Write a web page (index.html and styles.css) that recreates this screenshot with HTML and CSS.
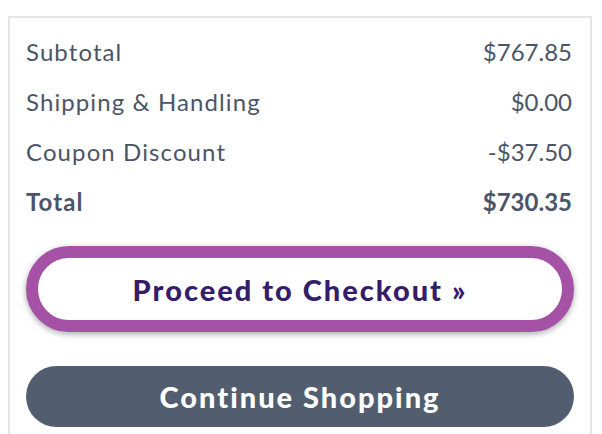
FILE: index.html
```html
<!DOCTYPE html>
<html>
<head>
<meta charset="utf-8">
<link rel="stylesheet" href="styles.css">
</head>
<body>
<div class="summary">
  <div class="rows">
    <div class="row"><span class="label">Subtotal</span><span class="value">$767.85</span></div>
    <div class="row"><span class="label">Shipping &amp; Handling</span><span class="value">$0.00</span></div>
    <div class="row"><span class="label">Coupon Discount</span><span class="value">-$37.50</span></div>
    <div class="row total"><span class="label">Total</span><span class="value">$730.35</span></div>
  </div>
  <button class="btn checkout">Proceed to Checkout »</button>
  <button class="btn continue">Continue Shopping</button>
</div>
</body>
</html>
```

FILE: styles.css
```css
html, body {
  margin: 0;
  padding: 0;
  background: #ffffff;
}

body {
  font-family: Lato, "Open Sans", sans-serif;
  color: #4b5567;
  overflow: hidden;
  height: 434px;
}

.summary {
  margin: 16px 10px 0 8px;
  border: 2px solid #e6e6e6;
  border-bottom: none;
  padding: 9px 16px 40px 16px;
  display: flex;
  flex-direction: column;
}

.rows {
  display: flex;
  flex-direction: column;
}

.row {
  display: flex;
  justify-content: space-between;
  height: 50px;
  line-height: 50px;
  font-size: 24px;
  padding-right: 2px;
}

.label {
  letter-spacing: 1.1px;
}

.value {
  letter-spacing: 0;
}

.row.total {
  font-weight: 700;
}

.btn {
  font-family: Lato, "Open Sans", sans-serif;
  font-weight: 900;
  font-size: 29px;
  letter-spacing: 2px;
  border-radius: 50px;
  width: 100%;
  cursor: pointer;
  display: flex;
  align-items: center;
  justify-content: center;
  padding: 0;
}

.checkout {
  margin-top: 19px;
  height: 86px;
  border: 12px solid #a451a6;
  background: #ffffff;
  color: #361d6b;
  box-shadow: 0 2px 6px rgba(0, 0, 0, 0.35);
}

.continue {
  margin-top: 34px;
  height: 61px;
  border: none;
  background: #525e6f;
  color: #ffffff;
}
```
